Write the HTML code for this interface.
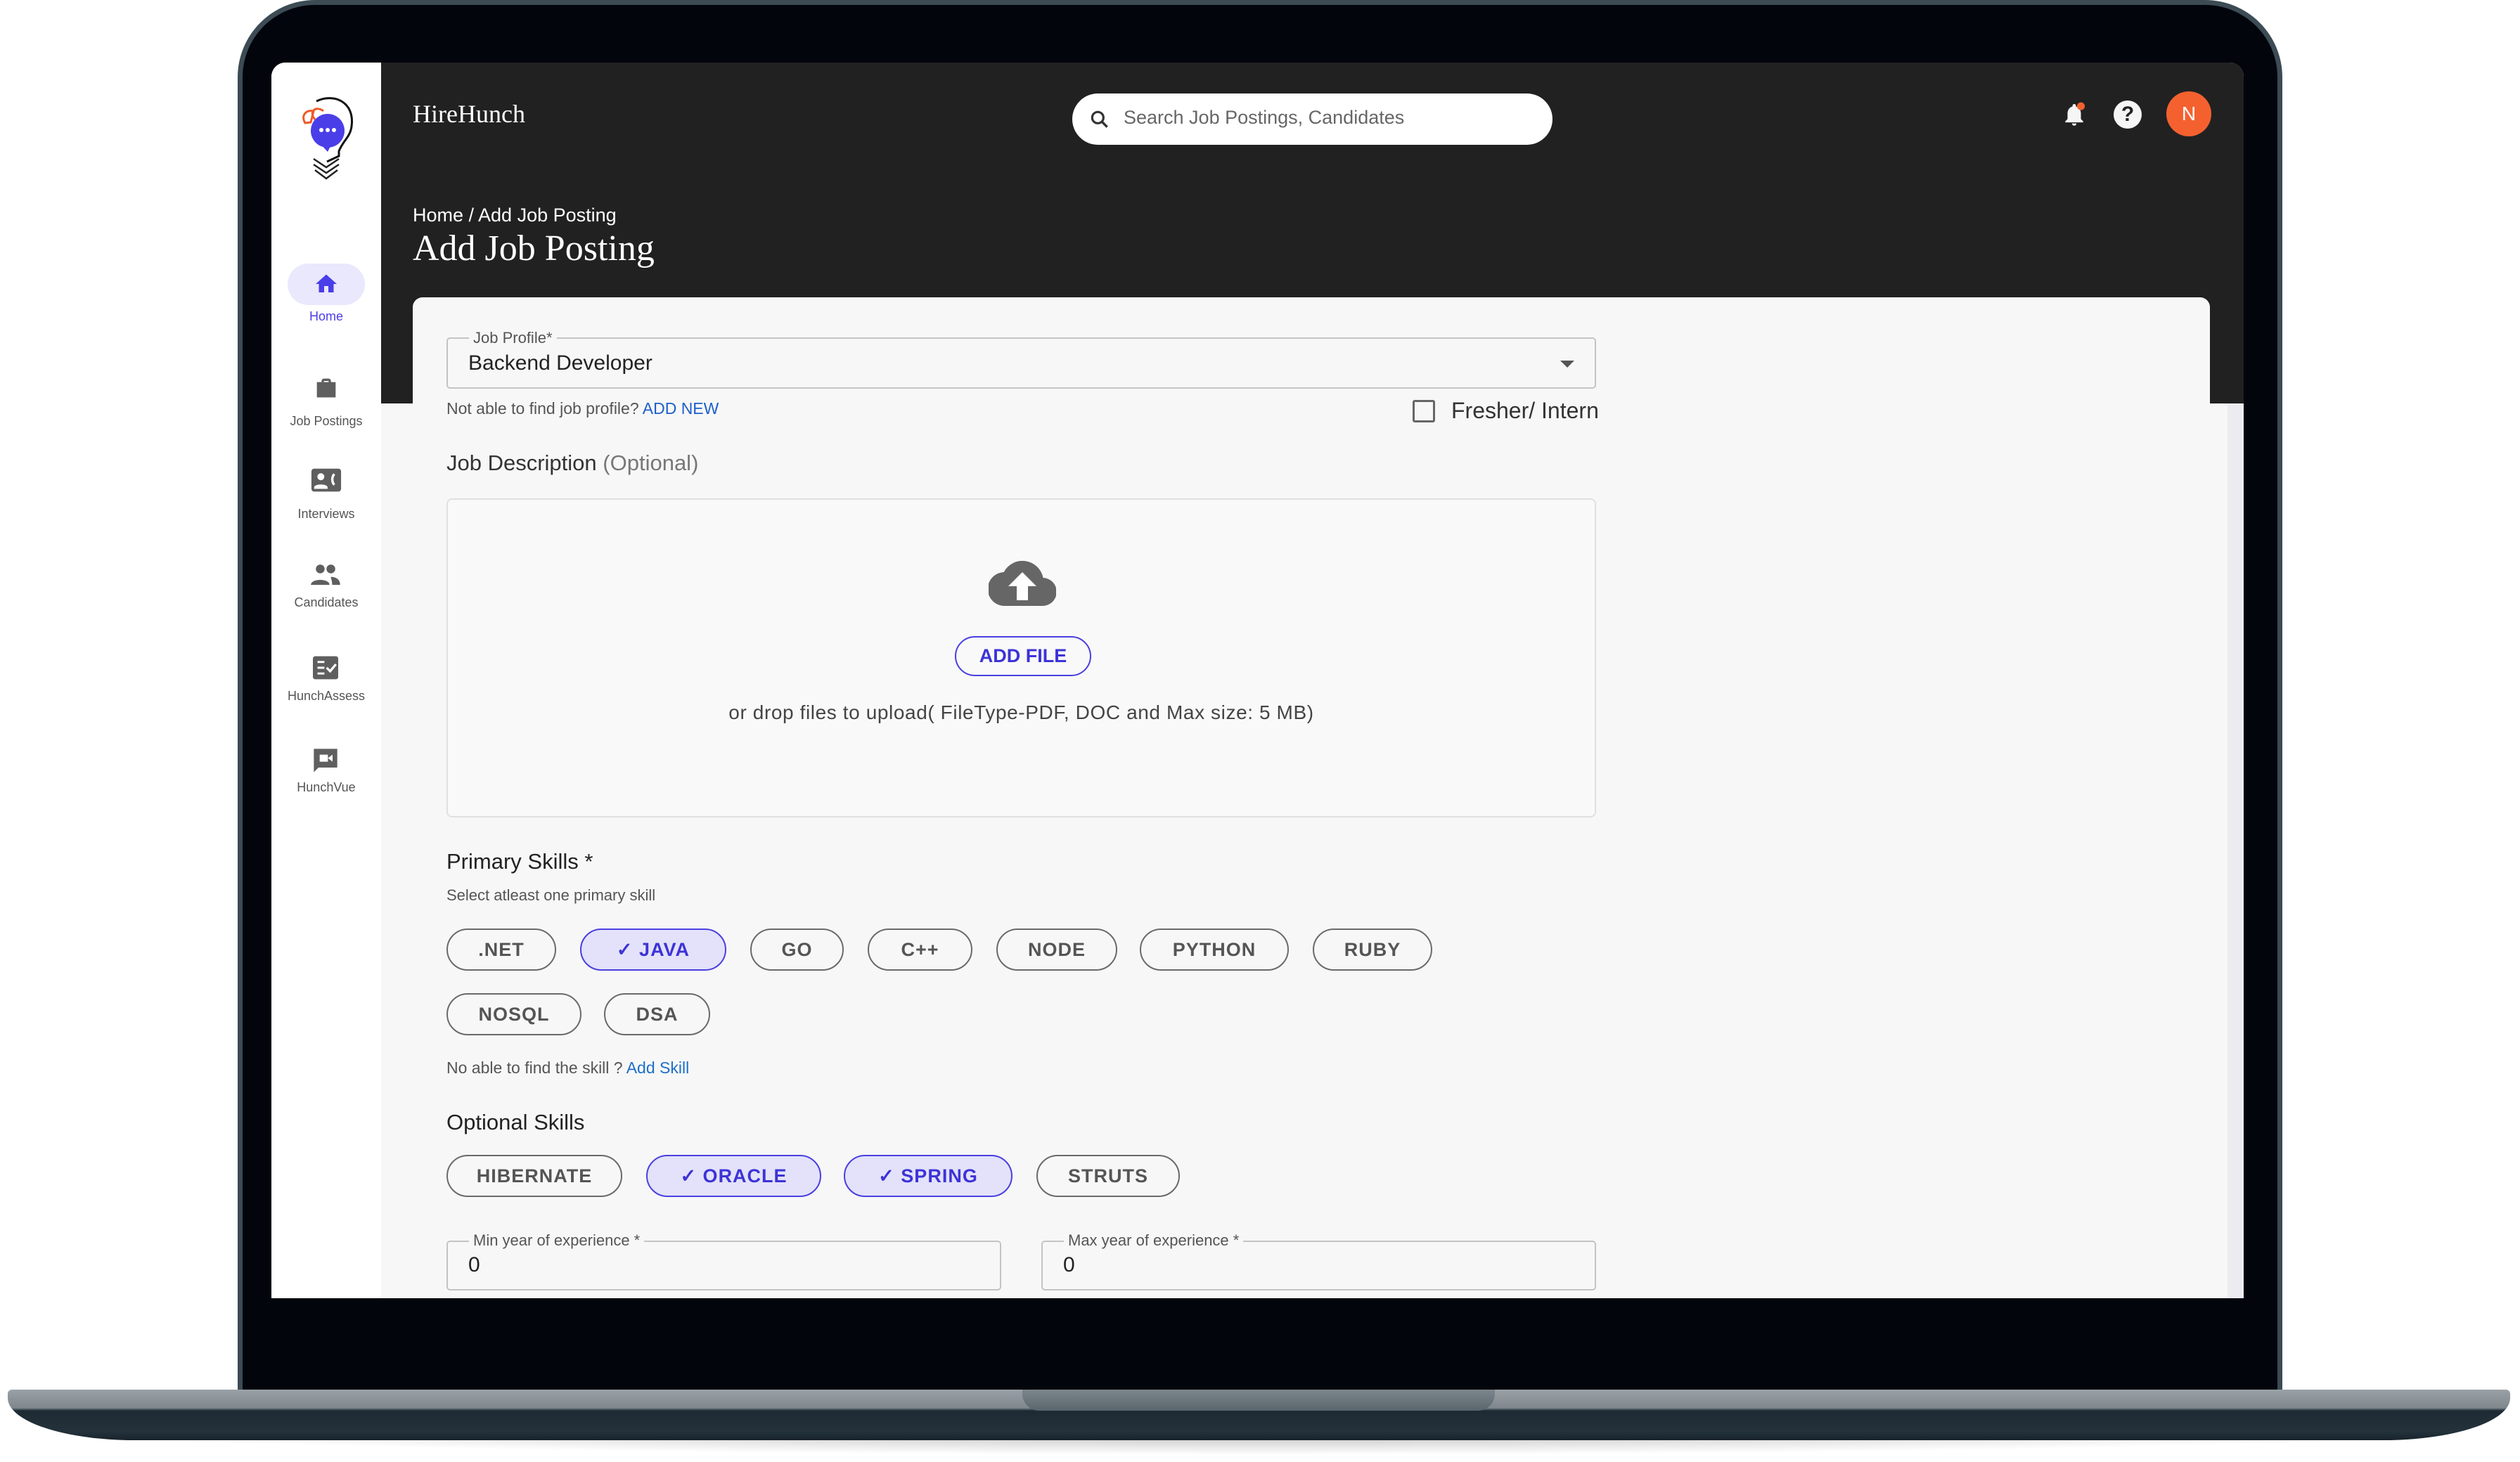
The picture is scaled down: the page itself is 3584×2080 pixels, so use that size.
<!DOCTYPE html>
<html><head><meta charset="utf-8"><style>
*{margin:0;padding:0;box-sizing:border-box}
body{width:3584px;height:2080px;background:#fff;position:relative;overflow:hidden;font-family:"Liberation Sans",sans-serif}
.a{position:absolute}
.chip{position:absolute;height:60px;border:2.5px solid #6a6a6a;border-radius:30px;font-weight:bold;font-size:27px;color:#555;display:flex;align-items:center;justify-content:center;letter-spacing:1px}
.sel{background:#e3e2fa;border-color:#4a3fe0;color:#3d33d6}
.nav{position:absolute;left:386px;width:156px;text-align:center;font-size:18px;color:#555}
.fl{position:absolute;border:2px solid #c4c4c4;border-radius:5px}
.lab{position:absolute;background:#f7f7f7;padding:0 6px;font-size:22px;color:#555;top:-15px;left:30px}
</style></head><body>
<div class="a" style="left:60px;top:2000px;width:3460px;height:70px;border-radius:50%;background:radial-gradient(ellipse at center,rgba(0,0,0,.28),rgba(0,0,0,0) 70%)"></div>
<div class="a" style="left:338px;top:0;width:2908px;height:1985px;background:#03050d;border:7px solid #3c4b54;border-bottom:none;border-radius:110px 110px 0 0"></div>
<div class="a" style="left:11px;top:1977px;width:3559px;height:72px;background:linear-gradient(#9aa2a7 0,#7f888d 26px,#1e2a33 30px,#24323b 60px,#18232b);border-radius:6px 6px 180px 180px/6px 6px 60px 60px"></div>
<div class="a" style="left:1454px;top:1977px;width:672px;height:30px;background:linear-gradient(#7d878d,#59656c);border-radius:0 0 24px 24px"></div>
<div class="a" style="left:386px;top:89px;width:2805px;height:1758px;background:#f7f7f7;border-radius:20px 20px 0 0;overflow:hidden">
 <div class="a" style="left:0;top:0;width:156px;height:1758px;background:#fff"></div>
 <div class="a" style="left:156px;top:0;width:2649px;height:485px;background:#212121"></div>
 <div class="a" style="left:2782px;top:485px;width:23px;height:1273px;background:#ececf0"></div>
 <div class="a" style="left:201px;top:334px;width:2556px;height:1430px;background:#f7f7f7;border-radius:14px 14px 0 0"></div>
</div>
<svg class="a" style="left:420px;top:130px" width="100" height="130" viewBox="0 0 100 130">
<path d="M30 14 C55 2 85 15 80 50 C78 65 68 70 62 85 L62 92 L45 100" fill="none" stroke="#111" stroke-width="3"/>
<path d="M28 40 C18 28 30 20 40 28" fill="none" stroke="#f05a28" stroke-width="3"/>
<path d="M14 45 C8 35 14 26 26 28 L22 44 Z" fill="none" stroke="#f05a28" stroke-width="3"/>
<circle cx="46" cy="56" r="24" fill="#4a3ee8"/>
<path d="M35 74 L46 86 L52 74Z" fill="#4a3ee8"/>
<circle cx="37" cy="55" r="3" fill="#fff"/><circle cx="46" cy="55" r="3" fill="#fff"/><circle cx="55" cy="55" r="3" fill="#fff"/>
<path d="M26 96 L44 108 L62 96 M26 104 L44 116 L62 104 M28 112 L44 124 L60 112" fill="none" stroke="#222" stroke-width="2.5"/>
</svg>
<div class="a" style="left:587px;top:141px;font-family:'Liberation Serif',serif;font-size:36px;color:#fff">HireHunch</div>
<div class="a" style="left:1525px;top:133px;width:683px;height:73px;background:#fff;border-radius:37px"></div>
<svg class="a" style="left:1548px;top:154px" width="32" height="32" viewBox="0 0 24 24"><circle cx="10" cy="10" r="6" fill="none" stroke="#333" stroke-width="2.4"/><path d="M14.5 14.5 L20 20" stroke="#333" stroke-width="2.6"/></svg>
<div class="a" style="left:1598px;top:152px;font-size:27px;color:#666">Search Job Postings, Candidates</div>
<svg class="a" style="left:2931px;top:144px" width="38" height="38" viewBox="0 0 24 24"><path d="M12 22a2 2 0 0 0 2-2h-4a2 2 0 0 0 2 2zm6-6v-5c0-3-1.6-5.6-4.5-6.3V4a1.5 1.5 0 0 0-3 0v.7C7.6 5.4 6 8 6 11v5l-2 2v1h16v-1z" fill="#f5f5f5"/><circle cx="18" cy="4.5" r="3.5" fill="#f4612f"/></svg>
<div class="a" style="left:3006px;top:143px;width:40px;height:40px;border-radius:50%;background:#f5f5f5;color:#212121;font-weight:bold;font-size:30px;text-align:center;line-height:40px">?</div>
<div class="a" style="left:3081px;top:130px;width:64px;height:64px;border-radius:50%;background:#f4612f;color:#fff;font-size:28px;text-align:center;line-height:64px">N</div>
<div class="a" style="left:587px;top:291px;font-size:27px;color:#fff">Home / Add Job Posting</div>
<div class="a" style="left:587px;top:324px;font-family:'Liberation Serif',serif;font-size:52px;color:#fff">Add Job Posting</div>
<div class="a" style="left:409px;top:375px;width:110px;height:59px;border-radius:30px;background:#e9e8fc"></div>
<svg class="a" style="left:446px;top:386px" width="36" height="36" viewBox="0 0 24 24"><path d="M10 20v-6h4v6h5v-8h3L12 3 2 12h3v8z" fill="#4a3ee8"/></svg>
<div class="nav" style="top:440px;color:#4a3ee8">Home</div>
<svg class="a" style="left:444px;top:532px" width="40" height="40" viewBox="0 0 24 24"><path d="M10 4h4a2 2 0 0 1 2 2v1h4v13H4V7h4V6a2 2 0 0 1 2-2zm0 3h4V6h-4z" fill="#5f5f5f"/></svg>
<div class="nav" style="top:589px">Job Postings</div>
<svg class="a" style="left:441px;top:664px" width="46" height="40" viewBox="0 0 24 20"><rect x="1" y="1" width="22" height="17" rx="2" fill="#5f5f5f"/><circle cx="8" cy="7" r="2.6" fill="#fff"/><path d="M3 15c0-3 10-3 10 0v1H3z" fill="#fff"/><path d="M18 5c-2 2-2 6 0 8" stroke="#fff" stroke-width="1.8" fill="none"/></svg>
<div class="nav" style="top:721px">Interviews</div>
<svg class="a" style="left:440px;top:800px" width="46" height="34" viewBox="0 0 24 18"><circle cx="8" cy="5" r="3.3" fill="#5f5f5f"/><circle cx="16" cy="5" r="3.3" fill="#5f5f5f"/><path d="M1 17c0-5 14-5 14 0zM16 11c4 0 7 2 7 6h-6c0-3-1-5-1-6z" fill="#5f5f5f"/></svg>
<div class="nav" style="top:847px">Candidates</div>
<svg class="a" style="left:443px;top:932px" width="40" height="36" viewBox="0 0 24 22"><rect x="1" y="1" width="22" height="20" rx="2" fill="#5f5f5f"/><path d="M5 6h6M5 11h6M5 16h6" stroke="#fff" stroke-width="1.8"/><path d="M13 11l3 3 5-6" stroke="#fff" stroke-width="2" fill="none"/></svg>
<div class="nav" style="top:980px">HunchAssess</div>
<svg class="a" style="left:443px;top:1062px" width="40" height="40" viewBox="0 0 24 24"><path d="M2 2h20v16H6l-4 4z" fill="#5f5f5f"/><rect x="7" y="7" width="7" height="6" fill="#fff"/><path d="M14 10l4-3v6z" fill="#fff"/></svg>
<div class="nav" style="top:1110px">HunchVue</div>
<div class="fl" style="left:635px;top:480px;width:1635px;height:73px"><div class="lab" style="top:-14px">Job Profile*</div></div>
<div class="a" style="left:666px;top:500px;font-size:30px;color:#222">Backend Developer</div>
<div class="a" style="left:2219px;top:513px;width:0;height:0;border-left:10px solid transparent;border-right:10px solid transparent;border-top:10px solid #555"></div>
<div class="a" style="left:635px;top:568px;font-size:23px;color:#555">Not able to find job profile? <span style="color:#1e5fc9">ADD NEW</span></div>
<div class="a" style="left:2009px;top:569px;width:32px;height:32px;border:3px solid #666;border-radius:3px"></div>
<div class="a" style="left:2064px;top:566px;font-size:32px;color:#333">Fresher/ Intern</div>
<div class="a" style="left:635px;top:641px;font-size:31px;color:#333">Job Description <span style="color:#777">(Optional)</span></div>
<div class="a" style="left:635px;top:709px;width:1635px;height:454px;border:2px solid #e0e0e0;border-radius:8px;background:#f9f9f9"></div>
<svg class="a" style="left:1406px;top:798px" width="96" height="64" viewBox="0 0 24 16"><path d="M19.4 6A7.5 7.5 0 0 0 5.4 4 6 6 0 0 0 6 16h13a5 5 0 0 0 .4-10z" fill="#666"/><path d="M12 4l-5 5h3v5h4V9h3z" fill="#fff"/></svg>
<div class="a" style="left:1358px;top:905px;width:194px;height:57px;border:2.5px solid #4a3fe0;border-radius:29px;color:#3d33d6;font-weight:bold;font-size:27px;text-align:center;line-height:52px">ADD FILE</div>
<div class="a" style="left:635px;top:998px;width:1635px;text-align:center;font-size:28px;letter-spacing:0.6px;color:#444">or drop files to upload( FileType-PDF, DOC and Max size: 5 MB)</div>
<div class="a" style="left:635px;top:1208px;font-size:31px;color:#222">Primary Skills *</div>
<div class="a" style="left:635px;top:1261px;font-size:22px;color:#555">Select atleast one primary skill</div>
<div class="chip" style="left:635px;top:1321px;width:156px">.NET</div>
<div class="chip sel" style="left:825px;top:1321px;width:208px">✓ JAVA</div>
<div class="chip" style="left:1067px;top:1321px;width:133px">GO</div>
<div class="chip" style="left:1234px;top:1321px;width:149px">C++</div>
<div class="chip" style="left:1417px;top:1321px;width:172px">NODE</div>
<div class="chip" style="left:1621px;top:1321px;width:212px">PYTHON</div>
<div class="chip" style="left:1867px;top:1321px;width:170px">RUBY</div>
<div class="chip" style="left:635px;top:1413px;width:192px">NOSQL</div>
<div class="chip" style="left:859px;top:1413px;width:151px">DSA</div>
<div class="a" style="left:635px;top:1506px;font-size:23px;color:#555">No able to find the skill ? <span style="color:#1e6fc9">Add Skill</span></div>
<div class="a" style="left:635px;top:1579px;font-size:31px;color:#222">Optional Skills</div>
<div class="chip" style="left:635px;top:1643px;width:250px">HIBERNATE</div>
<div class="chip sel" style="left:919px;top:1643px;width:249px">✓ ORACLE</div>
<div class="chip sel" style="left:1200px;top:1643px;width:240px">✓ SPRING</div>
<div class="chip" style="left:1474px;top:1643px;width:204px">STRUTS</div>
<div class="fl" style="left:635px;top:1765px;width:789px;height:71px"><div class="lab">Min year of experience *</div></div>
<div class="a" style="left:666px;top:1783px;font-size:30px;color:#222">0</div>
<div class="fl" style="left:1481px;top:1765px;width:789px;height:71px"><div class="lab">Max year of experience *</div></div>
<div class="a" style="left:1512px;top:1783px;font-size:30px;color:#222">0</div>
</body></html>
